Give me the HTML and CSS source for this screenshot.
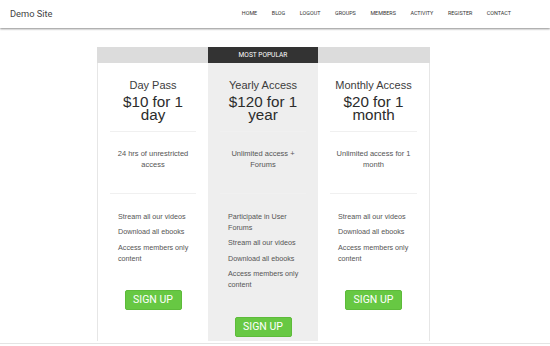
FILE: index.html
```html
<!DOCTYPE html>
<html lang="en">
<head>
    <meta charset="UTF-8">
    <title>Demo Site</title>
    <link rel="stylesheet" href="styles.css">
</head>
<body>
<div class="site_header">
    <div class="site_title">Demo Site</div>
    <ul class="nav">
        <li>Home</li>
        <li>Blog</li>
        <li>Logout</li>
        <li>Groups</li>
        <li>Members</li>
        <li>Activity</li>
        <li>Register</li>
        <li>Contact</li>
    </ul>
</div>

<div class="content">
    <div class="pricing">
        <div class="plan">
            <div class="plan_head"></div>
            <div class="plan_body">
                <div class="plan_name">Day Pass</div>
                <div class="plan_price">$10 for 1<br>day</div>
                <div class="plan_desc">24 hrs of unrestricted<br>access</div>
                <ul class="plan_features">
                    <li>Stream all our videos</li>
                    <li>Download all ebooks</li>
                    <li>Access members only<br>content</li>
                </ul>
                <div class="btn">SIGN UP</div>
            </div>
        </div>
        <div class="plan popular">
            <div class="plan_head">MOST POPULAR</div>
            <div class="plan_body">
                <div class="plan_name">Yearly Access</div>
                <div class="plan_price">$120 for 1<br>year</div>
                <div class="plan_desc">Unlimited access +<br>Forums</div>
                <ul class="plan_features">
                    <li>Participate in User<br>Forums</li>
                    <li>Stream all our videos</li>
                    <li>Download all ebooks</li>
                    <li>Access members only<br>content</li>
                </ul>
                <div class="btn">SIGN UP</div>
            </div>
        </div>
        <div class="plan last">
            <div class="plan_head"></div>
            <div class="plan_body">
                <div class="plan_name">Monthly Access</div>
                <div class="plan_price">$20 for 1<br>month</div>
                <div class="plan_desc">Unlimited access for 1<br>month</div>
                <ul class="plan_features">
                    <li>Stream all our videos</li>
                    <li>Download all ebooks</li>
                    <li>Access members only<br>content</li>
                </ul>
                <div class="btn">SIGN UP</div>
            </div>
        </div>
    </div>
    <div class="footer_line"></div>
</div>
</body>
</html>
```

FILE: styles.css
```css
body {
    margin: 0;
    background-color: #fff;
    font-family: "Liberation Sans", Arial, sans-serif;
}

.site_header {
    height: 28px;
    display: flex;
    align-items: center;
    justify-content: space-between;
    padding: 0 39px 2px 10px;
    box-sizing: border-box;
    background-color: #fff;
    box-shadow: 0 1px 2px rgba(0, 0, 0, 0.45);
    position: relative;
}

.site_title {
    font-family: Roboto, sans-serif;
    font-size: 9.3px;
    color: #444;
}

.nav {
    display: flex;
    gap: 14.6px;
    margin: 0;
    padding: 0;
    list-style: none;
}

.nav li {
    font-family: Roboto, sans-serif;
    font-size: 5.4px;
    text-transform: uppercase;
    color: #333;
}

.content {
    padding-top: 19px;
}

.pricing {
    display: grid;
    grid-template-columns: 111px 110px 112px;
    margin-left: 97px;
    width: 333px;
}

.plan {
    display: flex;
    flex-direction: column;
    background-color: #fff;
}

.plan:first-child .plan_body {
    border-left: 1px solid #e6e6e6;
}

.plan.last .plan_body {
    border-right: 1px solid #e6e6e6;
}

.plan_head {
    height: 16px;
    background-color: #dcdcdc;
    color: #fff;
    font-family: Roboto, sans-serif;
    font-size: 6.6px;
    line-height: 16px;
    text-align: center;
}

.popular .plan_head {
    background-color: #333;
}

.plan_body {
    flex: 1;
    display: flex;
    flex-direction: column;
    padding: 16px 0 4px;
    box-sizing: border-box;
}

.popular .plan_body {
    background-color: #eee;
}

.plan_name {
    font-size: 11px;
    line-height: 13px;
    color: #3c3c3c;
    text-align: center;
}

.plan_price {
    margin-top: 3px;
    font-size: 15.2px;
    line-height: 13px;
    color: #2c2c2c;
    text-align: center;
}

.plan_desc {
    margin: 10px 12px 0;
    padding: 16px 0 23px;
    border-top: 1px solid #f0f0f0;
    border-bottom: 1px solid #f0f0f0;
    font-size: 7.5px;
    line-height: 11px;
    color: #555;
    text-align: center;
}

.plan_features {
    list-style: none;
    margin: 16.5px 0 0;
    padding: 0 0 0 20px;
}

.plan_features li {
    font-size: 7.2px;
    line-height: 11px;
    color: #555;
    margin-bottom: 4.6px;
}

.plan_features li:last-child {
    margin-bottom: 0;
}

.btn {
    align-self: center;
    margin-top: 26.8px;
    width: 57px;
    height: 20px;
    box-sizing: border-box;
    background-color: #67c843;
    border: 1px solid #5dbb3a;
    border-radius: 2px;
    color: #fff;
    font-family: Roboto, sans-serif;
    font-size: 10.5px;
    line-height: 18px;
    text-align: center;
}

.footer_line {
    margin-top: 2px;
    border-top: 1px solid #e4e4e4;
}
```
